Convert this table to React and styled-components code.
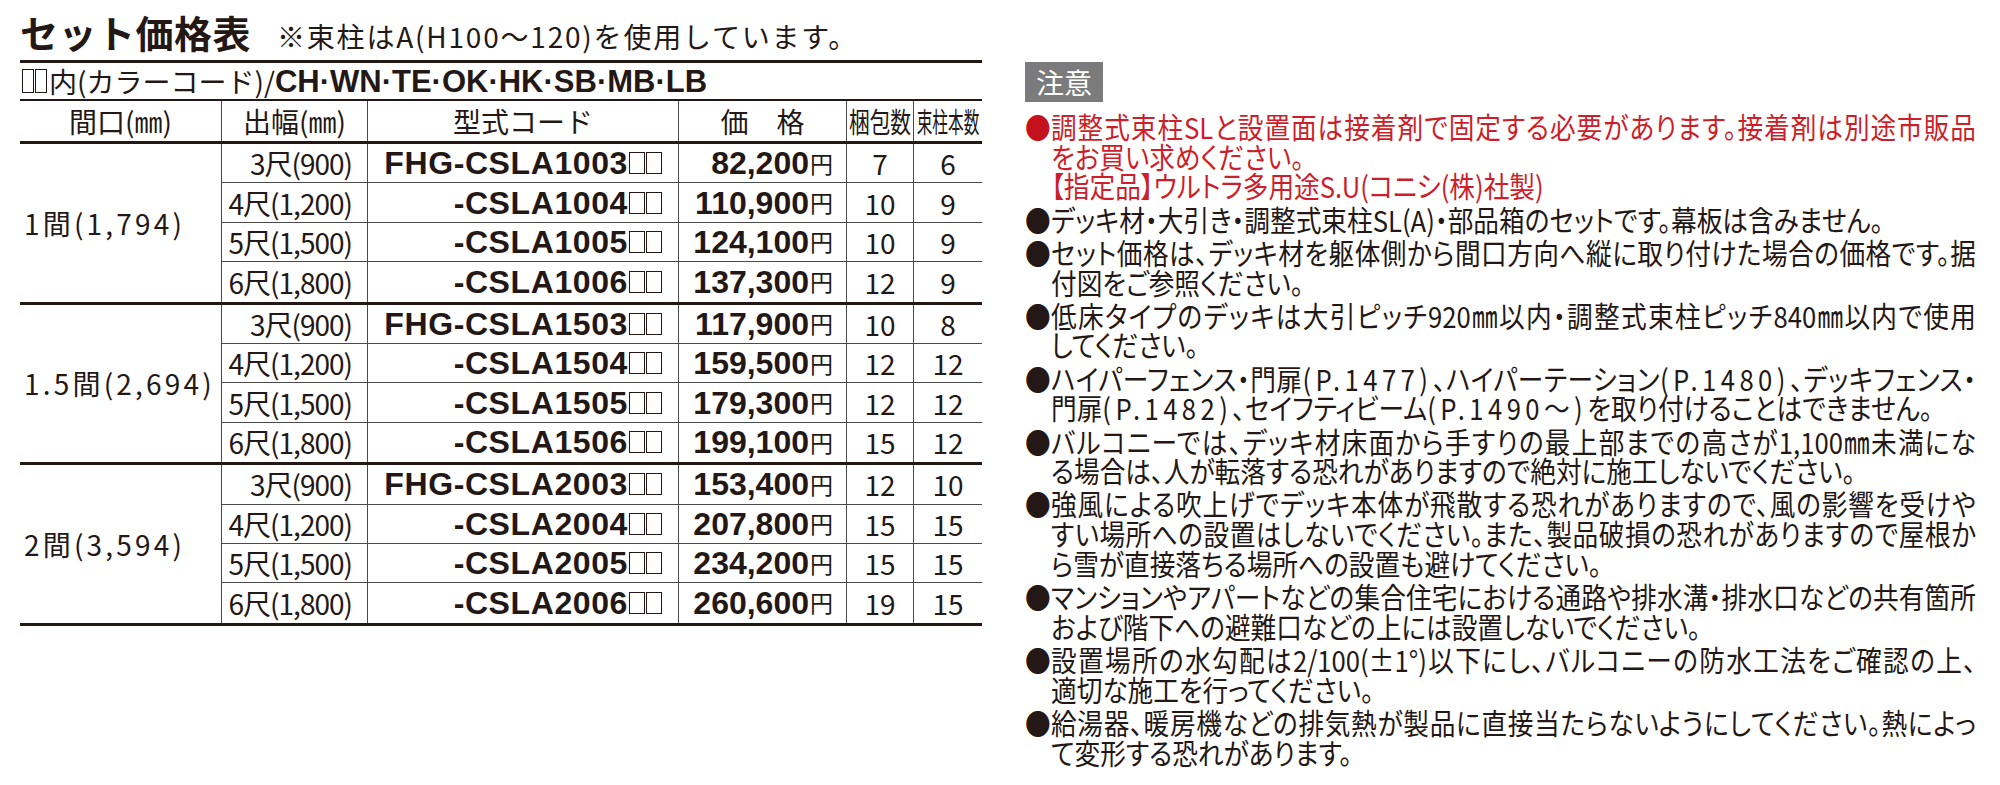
import React from "react";
import styled, { createGlobalStyle } from "styled-components";

const JP = `"Noto Sans CJK JP", "Noto Sans CJK SC", sans-serif`;
const LATIN = `"Liberation Sans", "Noto Sans CJK JP", sans-serif`;
const INK = "#231815";
const RULE = "#4a4a4a";

const GlobalStyle = createGlobalStyle`
  html, body { margin: 0; padding: 0; background: #fff; overflow: hidden; }
  body { font-family: ${JP}; color: ${INK}; }
  *, *::before, *::after { box-sizing: border-box; }
`;

const COLS = "202px 146px 311px 168px 67px 68px";

const Page = styled.div`
  display: flex;
  align-items: flex-start;
  width: 2000px;
  height: 785px;
  padding: 8px 0 0 20px;
`;

const LeftCol = styled.section`
  flex: none;
  width: 962px;
`;

const RightCol = styled.section`
  flex: none;
  width: 951px;
  margin-left: 43px;
  margin-top: 54px;
`;

const TitleRow = styled.div`
  display: flex;
  align-items: baseline;
  height: 52px;
`;

const Title = styled.h1`
  margin: 0;
  font: 700 38px/48px ${JP};
  letter-spacing: 0.5px;
`;

const Subtitle = styled.span`
  margin-left: 26px;
  font: 400 28px/48px ${JP};
  letter-spacing: 1.8px;
`;

const ColorRow = styled.div`
  display: flex;
  align-items: center;
  height: 41px;
  padding-left: 2px;
  border-top: 3px solid ${INK};
  border-bottom: 2px solid ${INK};
  font: 400 28px/1 ${JP};
`;

const CodeBox = styled.span`
  display: inline-block;
  flex: none;
  width: ${(p) => p.$w}px;
  height: ${(p) => p.$h}px;
  border: 1px solid ${INK};
`;

const ColorBoxes = styled.span`
  display: inline-flex;
  gap: 1px;
  margin-right: 2px;
`;

const ColorCodes = styled.span`
  font: 700 31px/1 ${LATIN};
`;

const HeaderRow = styled.div`
  display: grid;
  grid-template-columns: ${COLS};
  height: 43px;
  border-bottom: 3px solid ${INK};
`;

const HeadCell = styled.div`
  display: flex;
  align-items: center;
  justify-content: center;
  border-right: ${(p) => (p.$last ? "none" : `1px solid ${RULE}`)};
  font: 400 28px/1 ${JP};
  white-space: nowrap;
`;

const Squeeze = styled.span`
  display: inline-block;
  transform: scaleX(${(p) => p.$s});
  white-space: nowrap;
`;

const Group = styled.div`
  display: grid;
  grid-template-columns: ${COLS};
  grid-template-rows: repeat(4, 39.4px);
  border-bottom: 3px solid ${INK};
`;

const GroupLabel = styled.div`
  grid-row: 1 / span 4;
  display: flex;
  align-items: center;
  padding-left: 4px;
  border-right: 1px solid ${RULE};
  font: 400 28px/1 ${JP};
  letter-spacing: 3.2px;
  white-space: nowrap;
`;

const Cell = styled.div`
  display: flex;
  align-items: center;
  justify-content: ${(p) => p.$justify || "center"};
  padding-right: ${(p) => p.$pr || 0}px;
  border-right: ${(p) => (p.$lastCol ? "none" : `1px solid ${RULE}`)};
  border-bottom: ${(p) => (p.$lastRow ? "none" : `1px solid ${RULE}`)};
  white-space: nowrap;
`;

const Width = styled.span`
  font: 400 28px/1 ${JP};
  letter-spacing: -1px;
`;

const Code = styled.span`
  font: 700 32px/1 ${LATIN};
  letter-spacing: 0.6px;
`;

const Boxes = styled.span`
  display: inline-flex;
  gap: 1px;
  margin-left: 1px;
`;

const Price = styled.span`
  font: 700 32px/1 ${LATIN};
`;

const Yen = styled.span`
  font: 400 23px/1 ${JP};
  margin-left: 1px;
`;

const Count = styled.span`
  font: 400 28px/1 ${JP};
`;

const Caution = styled.div`
  display: flex;
  align-items: center;
  justify-content: center;
  width: 78px;
  height: 40px;
  background: #7b7b7b;
  color: #fff;
  font: 400 28px/1 ${JP};
`;

const SCALE = 0.885;

const Notes = styled.div`
  display: flex;
  flex-direction: column;
  gap: 3.5px;
  width: ${951 / SCALE}px;
  margin-top: 10px;
  transform: scaleX(${SCALE});
  transform-origin: left top;
  font: 400 29px/29.7px ${JP};
  font-feature-settings: "palt";
`;

const Note = styled.div`
  display: grid;
  grid-template-columns: ${26 / SCALE}px 1fr;
  color: ${(p) => (p.$red ? "#cc1f2b" : INK)};
`;

const Bullet = styled.span`
  color: ${(p) => (p.$red ? "#c4121f" : INK)};
`;

const Line = styled.div`
  white-space: nowrap;
  text-align: ${(p) => (p.$full ? "justify" : "left")};
  text-align-last: ${(p) => (p.$full ? "justify" : "auto")};
`;

const Num = styled.span`
  letter-spacing: 5px;
`;

const groups = [
  {
    label: "1間(1,794)",
    rows: [
      ["3尺(900)", "FHG-CSLA1003", "82,200", "7", "6"],
      ["4尺(1,200)", "-CSLA1004", "110,900", "10", "9"],
      ["5尺(1,500)", "-CSLA1005", "124,100", "10", "9"],
      ["6尺(1,800)", "-CSLA1006", "137,300", "12", "9"],
    ],
  },
  {
    label: "1.5間(2,694)",
    rows: [
      ["3尺(900)", "FHG-CSLA1503", "117,900", "10", "8"],
      ["4尺(1,200)", "-CSLA1504", "159,500", "12", "12"],
      ["5尺(1,500)", "-CSLA1505", "179,300", "12", "12"],
      ["6尺(1,800)", "-CSLA1506", "199,100", "15", "12"],
    ],
  },
  {
    label: "2間(3,594)",
    rows: [
      ["3尺(900)", "FHG-CSLA2003", "153,400", "12", "10"],
      ["4尺(1,200)", "-CSLA2004", "207,800", "15", "15"],
      ["5尺(1,500)", "-CSLA2005", "234,200", "15", "15"],
      ["6尺(1,800)", "-CSLA2006", "260,600", "19", "15"],
    ],
  },
];

// `full` = how many leading lines run the full measure (justified).
// Text in {braces} is set with wider tracking.
const notes = [
  {
    red: true,
    full: 1,
    lines: [
      "調整式束柱SLと設置面は接着剤で固定する必要があります。接着剤は別途市販品",
      "をお買い求めください。",
      "【指定品】ウルトラ多用途S.U(コニシ(株)社製)",
    ],
  },
  { full: 0, lines: ["デッキ材・大引き・調整式束柱SL(A)・部品箱のセットです。幕板は含みません。"] },
  {
    full: 1,
    lines: [
      "セット価格は、デッキ材を躯体側から間口方向へ縦に取り付けた場合の価格です。据",
      "付図をご参照ください。",
    ],
  },
  {
    full: 1,
    lines: [
      "低床タイプのデッキは大引ピッチ920㎜以内・調整式束柱ピッチ840㎜以内で使用",
      "してください。",
    ],
  },
  {
    full: 1,
    lines: [
      "ハイパーフェンス・門扉{(P.1477)}、ハイパーテーション{(P.1480)}、デッキフェンス・",
      "門扉{(P.1482)}、セイフティビーム{(P.1490〜)}を取り付けることはできません。",
    ],
  },
  {
    full: 1,
    lines: [
      "バルコニーでは、デッキ材床面から手すりの最上部までの高さが1,100㎜未満にな",
      "る場合は、人が転落する恐れがありますので絶対に施工しないでください。",
    ],
  },
  {
    full: 2,
    lines: [
      "強風による吹上げでデッキ本体が飛散する恐れがありますので、風の影響を受けや",
      "すい場所への設置はしないでください。また、製品破損の恐れがありますので屋根か",
      "ら雪が直接落ちる場所への設置も避けてください。",
    ],
  },
  {
    full: 1,
    lines: [
      "マンションやアパートなどの集合住宅における通路や排水溝・排水口などの共有箇所",
      "および階下への避難口などの上には設置しないでください。",
    ],
  },
  {
    full: 1,
    lines: [
      "設置場所の水勾配は2/100(±1°)以下にし、バルコニーの防水工法をご確認の上、",
      "適切な施工を行ってください。",
    ],
  },
  {
    full: 1,
    lines: [
      "給湯器、暖房機などの排気熱が製品に直接当たらないようにしてください。熱によっ",
      "て変形する恐れがあります。",
    ],
  },
];

function renderText(text) {
  return text
    .split(/[{}]/)
    .map((part, i) => (i % 2 === 1 ? <Num key={i}>{part}</Num> : <React.Fragment key={i}>{part}</React.Fragment>));
}

function PriceTable() {
  return (
    <>
      <HeaderRow>
        <HeadCell>間口(㎜)</HeadCell>
        <HeadCell>出幅(㎜)</HeadCell>
        <HeadCell>型式コード</HeadCell>
        <HeadCell>価　格</HeadCell>
        <HeadCell>
          <Squeeze $s={0.74}>梱包数</Squeeze>
        </HeadCell>
        <HeadCell $last>
          <Squeeze $s={0.56}>束柱本数</Squeeze>
        </HeadCell>
      </HeaderRow>
      {groups.map((g) => (
        <Group key={g.label}>
          <GroupLabel>{g.label}</GroupLabel>
          {g.rows.map((r, i) => {
            const last = i === g.rows.length - 1;
            return (
              <React.Fragment key={r[1]}>
                <Cell $justify="flex-end" $pr={15} $lastRow={last}>
                  <Width>{r[0]}</Width>
                </Cell>
                <Cell $justify="flex-end" $pr={16} $lastRow={last}>
                  <Code>{r[1]}</Code>
                  <Boxes>
                    <CodeBox $w={16} $h={22} />
                    <CodeBox $w={16} $h={22} />
                  </Boxes>
                </Cell>
                <Cell $justify="flex-end" $pr={13} $lastRow={last}>
                  <Price>{r[2]}</Price>
                  <Yen>円</Yen>
                </Cell>
                <Cell $lastRow={last}>
                  <Count>{r[3]}</Count>
                </Cell>
                <Cell $lastRow={last} $lastCol>
                  <Count>{r[4]}</Count>
                </Cell>
              </React.Fragment>
            );
          })}
        </Group>
      ))}
    </>
  );
}

export default function App() {
  return (
    <>
      <GlobalStyle />
      <Page>
        <LeftCol>
          <TitleRow>
            <Title>セット価格表</Title>
            <Subtitle>※束柱はA(H100〜120)を使用しています。</Subtitle>
          </TitleRow>
          <ColorRow>
            <ColorBoxes>
              <CodeBox $w={12} $h={24} />
              <CodeBox $w={12} $h={24} />
            </ColorBoxes>
            <span>内(カラーコード)/</span>
            <ColorCodes>CH·WN·TE·OK·HK·SB·MB·LB</ColorCodes>
          </ColorRow>
          <PriceTable />
        </LeftCol>
        <RightCol>
          <Caution>注意</Caution>
          <Notes>
            {notes.map((n, i) => (
              <Note key={i} $red={n.red}>
                <Bullet $red={n.red}>●</Bullet>
                <div>
                  {n.lines.map((l, j) => (
                    <Line key={j} $full={j < n.full}>
                      {renderText(l)}
                    </Line>
                  ))}
                </div>
              </Note>
            ))}
          </Notes>
        </RightCol>
      </Page>
    </>
  );
}
